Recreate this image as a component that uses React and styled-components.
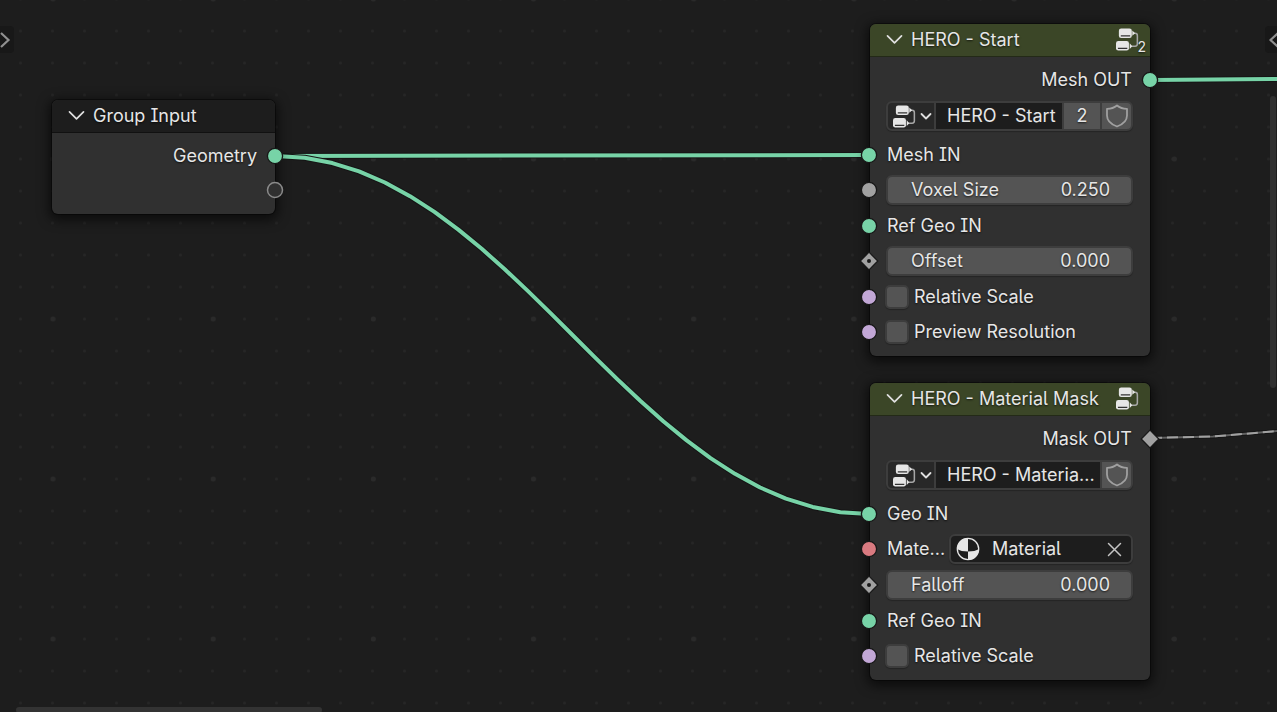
import React from "react";
import styled, { createGlobalStyle, css } from "styled-components";

const colors = {
  canvas: "#1d1d1d",
  node: "#303030",
  groupHeader: "#3b4627",
  inputHeader: "#1d1d1d",
  widget: "#545454",
  outline: "#3d3d3d",
  menu: "#282828",
  text: "#e6e6e6",
  geometry: "#77d3a7",
  float: "#a1a1a1",
  boolean: "#c2a7d6",
  material: "#d97a80",
};

const GlobalStyle = createGlobalStyle`
  * { box-sizing: border-box; }
  body {
    margin: 0;
    background: ${colors.canvas};
    color: ${colors.text};
    font: 18px/24px Inter, "Liberation Sans", sans-serif;
    font-feature-settings: "cv08", "cv05";
    font-variation-settings: "opsz" 22;
  }
  button, input {
    font: inherit;
    font-feature-settings: inherit;
    font-variation-settings: inherit;
    color: inherit;
  }
`;

const Editor = styled.main`
  position: relative;
  height: 100vh;
  overflow: hidden;
`;

const Backdrop = styled.svg`
  position: absolute;
  inset: 0;
  width: 100%;
  height: 100%;
`;

const Node = styled.section`
  position: absolute;
  left: ${(p) => p.$x}px;
  top: ${(p) => p.$y}px;
  width: ${(p) => p.$width}px;
  border-radius: 6px;
  background: ${colors.node};
  box-shadow: 0 0 0 1px rgba(0, 0, 0, 0.4), 0 3px 12px 3px rgba(0, 0, 0, 0.6);
  text-shadow: 0 1px 2px rgba(0, 0, 0, 0.7);
`;

const Header = styled.header`
  display: flex;
  align-items: center;
  gap: 8px;
  height: 33px;
  padding: 0 11px 1px 16px;
  border-bottom: 1px solid rgba(0, 0, 0, 0.4);
  border-radius: 6px 6px 0 0;
  background: ${(p) => (p.$group ? colors.groupHeader : colors.inputHeader)};
`;

const Collapse = styled.button`
  display: flex;
  padding: 0;
  border: 0;
  background: none;
`;

const Title = styled.h2`
  flex: 1;
  margin: 0;
  font-size: 18px;
  font-weight: 400;
  white-space: nowrap;
`;

const HeaderIcon = styled.span`
  position: relative;
  display: flex;
`;

const UserCount = styled.span`
  position: absolute;
  right: -7px;
  bottom: -4px;
  font-size: 14px;
  line-height: 16px;
`;

const Body = styled.div`
  display: flex;
  flex-direction: column;
  gap: 6px;
  padding: 9px 17px 10px 16px;
`;

const Row = styled.div`
  position: relative;
  display: flex;
  align-items: center;
  height: ${(p) => (p.$output ? 28 : p.$tall ? 30 : 29)}px;
  padding: 0 1px;
  ${(p) => p.$output && css`justify-content: flex-end;`}
`;

const SocketSlot = styled.span`
  position: absolute;
  top: 50%;
  ${(p) => (p.$output ? "right: -27px;" : "left: -27px;")}
  display: flex;
  width: 20px;
  height: 20px;
  margin-top: -10px;
`;

const control = css`
  height: 30px;
  border: 2px solid ${colors.outline};
  border-radius: 6px;
  box-shadow: 0 1px 1px rgba(0, 0, 0, 0.25);
`;

const NumberField = styled.label`
  ${control}
  display: flex;
  flex: 1;
  align-items: center;
  justify-content: space-between;
  margin: 0 -1px;
  padding: 0 21px 0 23px;
  background: ${colors.widget};
`;

const NumberInput = styled.input`
  width: 80px;
  padding: 0;
  border: 0;
  outline: 0;
  background: none;
  text-align: right;
  text-shadow: inherit;
`;

const CheckLabel = styled.label`
  display: flex;
  align-items: center;
  gap: 5px;
  margin-left: -2px;
`;

const Checkbox = styled.input.attrs({ type: "checkbox" })`
  appearance: none;
  width: 24px;
  height: 24px;
  margin: 0;
  border: 2px solid ${colors.outline};
  border-radius: 5px;
  background: ${colors.widget};
  box-shadow: 0 1px 1px rgba(0, 0, 0, 0.25);
`;

const DataBlock = styled.div`
  ${control}
  display: flex;
  margin: 1px 0 3px;
  background: ${colors.outline};
  gap: 2px;
  overflow: hidden;
`;

const BlockButton = styled.button`
  display: flex;
  align-items: center;
  justify-content: center;
  gap: 4px;
  width: ${(p) => p.$width}px;
  padding: 0;
  ${(p) => p.$menu && css`padding-left: 3px;`}
  border: 0;
  background: ${(p) => (p.$menu ? colors.menu : colors.widget)};
  text-shadow: inherit;
`;

const BlockName = styled.input`
  flex: 1;
  min-width: 0;
  padding: 0 0 0 11px;
  border: 0;
  outline: 0;
  background: ${colors.canvas};
`;

const ShortLabel = styled.label`
  flex: none;
  width: 62px;
  white-space: nowrap;
`;

const MaterialPicker = styled.div`
  ${control}
  display: flex;
  flex: 1;
  align-items: center;
  min-width: 0;
  margin-right: -1px;
  padding: 0 9px 0 5px;
  background: ${colors.canvas};
`;

const RegionTab = styled.button`
  position: absolute;
  top: 26px;
  ${(p) => (p.$side === "left" ? "left: 0; border-radius: 0 4px 4px 0;" : "right: 0; border-radius: 4px 0 0 4px;")}
  display: flex;
  align-items: center;
  justify-content: ${(p) => (p.$side === "left" ? "flex-start" : "flex-end")};
  width: ${(p) => (p.$side === "left" ? 14 : 12)}px;
  height: 27px;
  padding: 0;
  border: 0;
  overflow: hidden;
  background: #181818;
`;

const VerticalScroll = styled.div`
  position: absolute;
  top: 96px;
  right: 1px;
  width: 6px;
  height: 41%;
  border-radius: 3px;
  background: #303030;
`;

const HorizontalScroll = styled.div`
  position: absolute;
  left: 16px;
  bottom: -1px;
  width: 24%;
  height: 6px;
  border-radius: 3px;
  background: #333333;
`;

function Chevron() {
  return (
    <svg width="17" height="12" viewBox="0 0 17 12" fill="none" stroke="#e0e0e0" strokeWidth="1.7" strokeLinecap="round" strokeLinejoin="round">
      <path d="M1.5 1.8 L8.5 8.8 L15.500 1.8" />
    </svg>
  );
}

function NodeTreeIcon() {
  return (
    <svg width="23" height="23" viewBox="0 0 24 24" fill="none">
      <path d="M18 5.5 H20 Q22.3 5.5 22.3 8 V16.5 Q22.3 19 20 19 H16" stroke="#a6a6a6" strokeWidth="1.6" />
      <path d="M17 2.5 L20 5.5 L17 8 Z M14.3 16 L17 19 L14.3 22 Z" fill="#e6e6e6" />
      <rect x="3" y="0.5" width="13.500" height="10" rx="2.4" fill="#e6e6e6" />
      <rect x="0" y="13.500" width="13.500" height="10" rx="2.4" fill="#e6e6e6" />
      <path d="M5 8.2 H14.800 M2 21.2 H11.800" stroke="#333" strokeWidth="1.3" />
    </svg>
  );
}

function SmallChevron() {
  return (
    <svg width="12" height="8" viewBox="0 0 12 8" fill="none" stroke="#e0e0e0" strokeWidth="1.8" strokeLinecap="round" strokeLinejoin="round">
      <path d="M1.500 2 L6 6.500 L10.500 2" />
    </svg>
  );
}

function ShieldIcon() {
  return (
    <svg width="24" height="24" viewBox="0 0 24 24" fill="none" stroke="#a0a0a0" strokeWidth="1.8" strokeLinejoin="round">
      <path d="M12 1.5 C9 4 5.5 4.8 2 4.8 V11.5 C2 17 6.5 20.5 12 22.5 C17.500 20.5 22 17 22 11.5 V4.8 C18.500 4.8 15 4 12 1.500 Z" />
    </svg>
  );
}

function MaterialIcon() {
  return (
    <svg width="24" height="24" viewBox="0 0 24 24">
      <circle cx="12" cy="12" r="10.7" fill="#1d1d1d" stroke="#e6e6e6" strokeWidth="1.3" />
      <path d="M12 1 A11 11 0 0 0 1 12 Q5 14.500 12 14.500 Z" fill="#e6e6e6" />
      <path d="M12 14.500 Q19 14.500 23 12 A11 11 0 0 1 12 23 Z" fill="#e6e6e6" />
    </svg>
  );
}

const ClearButton = styled.button`
  display: flex;
  padding: 0;
  border: 0;
  background: none;
`;

const MaterialName = styled.input`
  flex: 1;
  min-width: 0;
  padding: 0 0 0 12px;
  border: 0;
  outline: 0;
  background: none;
`;

function Socket({ shape = "circle", color, output }) {
  return (
    <SocketSlot $output={output}>
      <svg width="20" height="20" viewBox="0 0 20 20">
        {shape === "circle" && <circle cx="10" cy="10" r="7.6" fill={color} stroke="#181818" strokeWidth="1.3" />}
        {shape === "virtual" && <circle cx="10" cy="10" r="7.500" fill="#303030" stroke="#8a8a8a" strokeWidth="1.5" />}
        {shape.startsWith("diamond") && (
          <path d="M10 1.2 L18.800 10 L10 18.800 L1.2 10 Z" fill={color} stroke="#181818" strokeWidth="1.2" />
        )}
        {shape === "diamond-dot" && <circle cx="10" cy="10" r="2" fill="#181818" />}
      </svg>
    </SocketSlot>
  );
}

function NodeHeader({ title, group, users }) {
  return (
    <Header $group={group}>
      <Collapse aria-label={`Collapse ${title}`}><Chevron /></Collapse>
      <Title>{title}</Title>
      {group && (
        <HeaderIcon>
          <NodeTreeIcon />
          {users && <UserCount>{users}</UserCount>}
        </HeaderIcon>
      )}
    </Header>
  );
}

function OutputRow({ label, ...socket }) {
  return (
    <Row $output>
      {label}
      <Socket output {...socket} />
    </Row>
  );
}

function InputRow({ label, color }) {
  return (
    <Row>
      <Socket color={color} />
      {label}
    </Row>
  );
}

function NumberRow({ label, value, shape }) {
  return (
    <Row $tall>
      <Socket shape={shape} color={colors.float} />
      <NumberField>
        {label}
        <NumberInput defaultValue={value} />
      </NumberField>
    </Row>
  );
}

function CheckRow({ label }) {
  return (
    <Row>
      <Socket color={colors.boolean} />
      <CheckLabel>
        <Checkbox />
        {label}
      </CheckLabel>
    </Row>
  );
}

function GroupSelector({ name, users }) {
  return (
    <DataBlock>
      <BlockButton $menu $width={46} aria-label="Browse node groups">
        <NodeTreeIcon />
        <SmallChevron />
      </BlockButton>
      <BlockName aria-label="Node group" defaultValue={name} />
      {users && <BlockButton $width={36}>{users}</BlockButton>}
      <BlockButton $width={29} aria-label="Fake user"><ShieldIcon /></BlockButton>
    </DataBlock>
  );
}

// Links are drawn as short straight segments along a cubic curve.
function curve([p0, p1, p2, p3], steps = 24) {
  const at = (axis, t) => {
    const u = 1 - t;
    return u * u * u * p0[axis] + 3 * u * u * t * p1[axis] + 3 * u * t * t * p2[axis] + t * t * t * p3[axis];
  };
  return Array.from({ length: steps + 1 }, (_, i) => `${i ? "L" : "M"}${at(0, i / steps)} ${at(1, i / steps)}`).join(" ");
}

const geometryToMask = curve([[276, 156], [510, 156], [635, 514], [869, 514]]);
const maskOut = "M1151 438 L1213 436.500 L1290 430";

function Link({ d }) {
  return (
    <>
      <path d={d} fill="none" stroke="#151515" strokeWidth="6" strokeLinejoin="round" />
      <path d={d} fill="none" stroke={colors.geometry} strokeWidth="4" strokeLinejoin="round" />
    </>
  );
}

export default function App() {
  return (
    <Editor>
      <GlobalStyle />
      <Backdrop aria-hidden="true">
        <defs>
          <pattern id="minor" x="4" y="15" width="32" height="32" patternUnits="userSpaceOnUse">
            <circle cx="16.500" cy="16" r="1.500" fill="#262626" />
          </pattern>
          <pattern id="major" x="-27" y="-81" width="160.200" height="160" patternUnits="userSpaceOnUse">
            <circle cx="80" cy="80" r="2.500" fill="#2a2a2a" />
          </pattern>
        </defs>
        <rect width="100%" height="100%" fill="url(#minor)" />
        <rect width="100%" height="100%" fill="url(#major)" />
        <Link d="M276 156 L869 155" />
        <Link d={geometryToMask} />
        <Link d="M1150 80 L1400 78" />
        <path d={maskOut} fill="none" stroke="#151515" strokeWidth="4" />
        <path d={maskOut} fill="none" stroke="#616161" strokeWidth="2" />
        <path d={maskOut} fill="none" stroke="#a1a1a1" strokeWidth="2" strokeDasharray="11 5" />
      </Backdrop>

      <Node $x={52} $y={100} $width={223}>
        <NodeHeader title="Group Input" />
        <Body>
          <OutputRow label="Geometry" color={colors.geometry} />
          <Row $output><Socket output shape="virtual" /></Row>
        </Body>
      </Node>

      <Node $x={870} $y={24} $width={280}>
        <NodeHeader title="HERO - Start" group users={2} />
        <Body>
          <OutputRow label="Mesh OUT" color={colors.geometry} />
          <GroupSelector name="HERO - Start" users={2} />
          <InputRow label="Mesh IN" color={colors.geometry} />
          <NumberRow label="Voxel Size" value="0.250" />
          <InputRow label="Ref Geo IN" color={colors.geometry} />
          <NumberRow label="Offset" value="0.000" shape="diamond-dot" />
          <CheckRow label="Relative Scale" />
          <CheckRow label="Preview Resolution" />
        </Body>
      </Node>

      <Node $x={870} $y={383} $width={280}>
        <NodeHeader title="HERO - Material Mask" group />
        <Body>
          <OutputRow label="Mask OUT" shape="diamond" color={colors.float} />
          <GroupSelector name="HERO - Materia..." />
          <InputRow label="Geo IN" color={colors.geometry} />
          <Row $tall>
            <Socket color={colors.material} />
            <ShortLabel htmlFor="material">Mate...</ShortLabel>
            <MaterialPicker>
              <MaterialIcon />
              <MaterialName id="material" defaultValue="Material" />
              <ClearButton aria-label="Clear material">
                <svg width="15" height="15" viewBox="0 0 15 15" stroke="#c4c4c4" strokeWidth="1.500" strokeLinecap="round">
                  <path d="M1.500 1.500 L13.500 13.500 M13.500 1.500 L1.500 13.500" />
                </svg>
              </ClearButton>
            </MaterialPicker>
          </Row>
          <NumberRow label="Falloff" value="0.000" shape="diamond-dot" />
          <InputRow label="Ref Geo IN" color={colors.geometry} />
          <CheckRow label="Relative Scale" />
        </Body>
      </Node>

      <RegionTab $side="left" aria-label="Show toolbar">
        <svg width="11" height="16" viewBox="0 0 11 16" fill="none" stroke="#909090" strokeWidth="2.200">
          <path d="M1 1 L8.500 8 L1 15" />
        </svg>
      </RegionTab>
      <RegionTab $side="right" aria-label="Show sidebar">
        <svg width="8" height="16" viewBox="0 0 8 16" fill="none" stroke="#909090" strokeWidth="2.200">
          <path d="M9 1 L1.500 8 L9 15" />
        </svg>
      </RegionTab>
      <VerticalScroll />
      <HorizontalScroll />
    </Editor>
  );
}
